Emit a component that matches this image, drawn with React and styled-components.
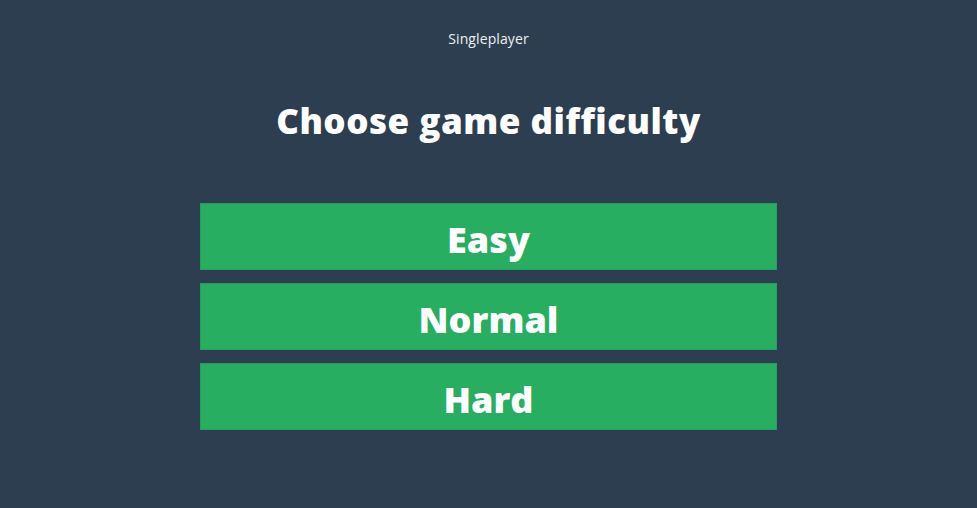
import React from "react";
import styled, { createGlobalStyle } from "styled-components";

const GlobalStyle = createGlobalStyle`
    html, body {
        margin: 0;
        padding: 0;
        height: 100%;
        background-color: #2c3e50;
    }
    body {
        font-family: "Open Sans", "Noto Sans", "Liberation Sans", sans-serif;
        color: #ffffff;
    }
`;

const Page = styled.div`
    min-height: 100vh;
    display: flex;
    flex-direction: column;
    align-items: center;
    padding-top: 29px;
    box-sizing: border-box;
`;

const Mode = styled.div`
    font-size: 14px;
    line-height: 20px;
    letter-spacing: 0.1px;
    color: #ecf0f1;
`;

const Title = styled.h1`
    margin: 49px 0 0;
    font-size: 35px;
    line-height: 46px;
    font-weight: 800;
    letter-spacing: 0.5px;
`;

const Options = styled.div`
    display: flex;
    flex-direction: column;
    gap: 13px;
    width: 577px;
    margin-top: 59px;
`;

const Option = styled.button`
    height: 67px;
    border: 1px solid #2a9d62;
    background-color: #27ae60;
    color: #ffffff;
    font-family: inherit;
    font-size: 36px;
    font-weight: 800;
    cursor: pointer;
    padding: 5px 0 0;
    &:hover {
        background-color: #2ecc71;
    }
`;

const levels = ["Easy", "Normal", "Hard"];

const App = () => {
    return (
        <>
            <GlobalStyle />
            <Page>
                <Mode>Singleplayer</Mode>
                <Title>Choose game difficulty</Title>
                <Options>
                    {levels.map((level) => (
                        <Option key={level}>{level}</Option>
                    ))}
                </Options>
            </Page>
        </>
    );
};

export default App;
